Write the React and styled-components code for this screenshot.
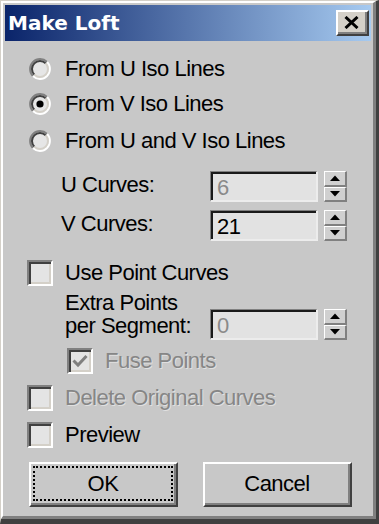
import React from 'react';
import styled, { createGlobalStyle } from 'styled-components';

const Global = createGlobalStyle`
  html, body { margin: 0; padding: 0; background: #c8c8c8; }
  body { width: 379px; height: 524px; overflow: hidden; }
`;

const FONT = `"Liberation Sans", Arial, sans-serif`;

const Window = styled.div`
  box-sizing: border-box;
  width: 379px;
  height: 524px;
  border-style: solid;
  border-width: 1px 3px 5px 1px;
  border-color: #d4d0c8 #404040 #404040 #d4d0c8;
  background: #c8c8c8;
`;

const Frame = styled.div`
  box-sizing: border-box;
  height: 100%;
  border-style: solid;
  border-width: 2px 3px 3px 2px;
  border-color: #ffffff #808080 #808080 #ffffff;
  padding: 2px;
  display: flex;
  flex-direction: column;
`;

const TitleBar = styled.div`
  height: 36px;
  flex: none;
  display: flex;
  align-items: center;
  justify-content: space-between;
  padding: 0 2px 0 3px;
  background: linear-gradient(to right, #0a246a 0%, #a6caf0 100%);
`;

const Title = styled.span`
  font-family: "DejaVu Sans", Verdana, sans-serif;
  font-weight: bold;
  font-size: 20px;
  color: #ffffff;
  letter-spacing: 0;
`;

const CloseButton = styled.div`
  box-sizing: border-box;
  width: 33px;
  height: 26px;
  border-style: solid;
  border-width: 2px;
  border-color: #ffffff #404040 #404040 #ffffff;
  box-shadow: inset -2px -2px 0 #808080;
  background: #d4d0c8;
  display: flex;
  align-items: center;
  justify-content: center;
  padding: 0 2px 2px 0;
`;

const Body = styled.div`
  flex: 1;
  display: flex;
  flex-direction: column;
  padding-left: 22px;
  font-family: ${FONT};
  font-size: 22px;
  letter-spacing: -0.5px;
  color: #000;
`;

const Row = styled.div`
  display: flex;
  align-items: ${(p) => p.$align || 'center'};
  height: ${(p) => p.$h || 26}px;
  margin-top: ${(p) => p.$mt || 0}px;
  padding-left: ${(p) => p.$indent || 0}px;
  gap: ${(p) => (p.$gap != null ? p.$gap : 12)}px;
`;

const Label = styled.span`
  line-height: 26px;
  white-space: nowrap;
  color: ${(p) => (p.$disabled ? '#868686' : '#000')};
  text-shadow: ${(p) => (p.$disabled ? '1px 1px 0 rgba(255,255,255,0.45)' : 'none')};
`;

const FieldLabel = styled.span`
  width: ${(p) => p.$w}px;
  flex: none;
  line-height: ${(p) => p.$lh || 26}px;
  padding-bottom: ${(p) => p.$pb || 0}px;
  white-space: nowrap;
`;

const Slot = styled.span`
  width: 26px;
  height: 26px;
  flex: none;
  display: flex;
  align-items: center;
  justify-content: center;
`;

const CheckBox = styled.span`
  box-sizing: border-box;
  width: 26px;
  height: 26px;
  flex: none;
  border-style: solid;
  border-width: 2px;
  border-color: #808080 #ffffff #ffffff #808080;
  box-shadow: inset 2px 2px 0 #404040, inset -2px -2px 0 #d4d0c8;
  background: #e4e4e4;
  display: flex;
  align-items: center;
  justify-content: center;
`;

const SpinGroup = styled.div`
  display: flex;
  gap: 6px;
  margin-top: ${(p) => p.$mt || 0}px;
`;

const Field = styled.div`
  box-sizing: border-box;
  width: 108px;
  height: 31px;
  border-style: solid;
  border-width: 1px 2px 2px 1px;
  border-color: #808080 #ececec #ececec #808080;
  box-shadow: inset 2px 2px 0 #1a1a1a;
  background: #e2e2e2;
  padding: 2px 0 0 6px;
  line-height: 27px;
  color: ${(p) => (p.$disabled ? '#8a8a8a' : '#000')};
`;

const Spinner = styled.div`
  box-sizing: border-box;
  width: 23px;
  height: 31px;
  display: flex;
  flex-direction: column;
`;

const SpinBtn = styled.div`
  box-sizing: border-box;
  flex: 1;
  border-style: solid;
  border-width: 1px 2px 2px 1px;
  border-color: #ffffff #808080 #808080 #ffffff;
  background: #d0d0d0;
  display: flex;
  align-items: center;
  justify-content: center;
`;

const ButtonRow = styled.div`
  display: flex;
  gap: 25px;
  margin-top: 14px;
  padding-left: 2px;
`;

const Button = styled.div`
  box-sizing: border-box;
  width: 149px;
  height: 45px;
  border-style: solid;
  border-width: 2px;
  border-color: #ffffff #404040 #404040 #ffffff;
  box-shadow: inset -2px -2px 0 #808080;
  background: #c8c8c8;
  padding: 2px 3px 4px 2px;
  display: flex;
`;

const ButtonFace = styled.span`
  flex: 1;
  display: flex;
  align-items: center;
  justify-content: center;
  border: 2px dotted ${(p) => (p.$focus ? '#000' : 'transparent')};
`;

const Radio = ({ checked }) => (
  <svg width="22" height="22" viewBox="0 0 22 22">
    <circle cx="11" cy="11" r="9" fill="#e6e6e6" />
    <path d="M3.93 18.07 A10 10 0 0 1 18.07 3.93" fill="none" stroke="#808080" strokeWidth="2" />
    <path d="M18.07 3.93 A10 10 0 0 1 3.93 18.07" fill="none" stroke="#ffffff" strokeWidth="2" />
    <path d="M5.34 16.66 A8 8 0 0 1 16.66 5.34" fill="none" stroke="#404040" strokeWidth="2" />
    <path d="M16.66 5.34 A8 8 0 0 1 5.34 16.66" fill="none" stroke="#d4d0c8" strokeWidth="2" />
    {checked && <circle cx="11" cy="11" r="3.6" fill="#000" />}
  </svg>
);

const Arrow = ({ up }) => (
  <svg width="10" height="6" viewBox="0 0 10 6">
    <path d={up ? 'M0 6 L5 0.5 L10 6 Z' : 'M0 0 L5 5.5 L10 0 Z'} fill="#000" />
  </svg>
);

const Spin = ({ value, disabled, mt }) => (
  <SpinGroup $mt={mt}>
    <Field $disabled={disabled}>{value}</Field>
    <Spinner>
      <SpinBtn><Arrow up /></SpinBtn>
      <SpinBtn><Arrow /></SpinBtn>
    </Spinner>
  </SpinGroup>
);

const Check = ({ checked, disabled }) => (
  <CheckBox>
    {checked && (
      <svg width="16" height="14" viewBox="0 0 16 14">
        <path d="M1.5 6.5 L6 11 L14.5 2" fill="none" stroke={disabled ? '#808080' : '#000'} strokeWidth="3" />
      </svg>
    )}
  </CheckBox>
);

export default function App() {
  return (
    <>
      <Global />
      <Window>
        <Frame>
          <TitleBar>
            <Title>Make Loft</Title>
            <CloseButton>
              <svg width="15" height="13" viewBox="0 0 15 13">
                <path d="M1.5 1 L13.5 12 M13.5 1 L1.5 12" stroke="#000" strokeWidth="3" />
              </svg>
            </CloseButton>
          </TitleBar>
          <Body>
            <Row $mt={15}>
              <Slot><Radio /></Slot>
              <Label>From U Iso Lines</Label>
            </Row>
            <Row $mt={9}>
              <Slot><Radio checked /></Slot>
              <Label>From V Iso Lines</Label>
            </Row>
            <Row $mt={11}>
              <Slot><Radio /></Slot>
              <Label>From U and V Iso Lines</Label>
            </Row>
            <Row $mt={17} $h={31} $indent={34} $gap={0}>
              <FieldLabel $w={149} $pb={4}>U Curves:</FieldLabel>
              <Spin value="6" disabled />
            </Row>
            <Row $mt={8} $h={31} $indent={34} $gap={0}>
              <FieldLabel $w={149} $pb={4}>V Curves:</FieldLabel>
              <Spin value="21" />
            </Row>
            <Row $mt={19}>
              <Check />
              <Label>Use Point Curves</Label>
            </Row>
            <Row $mt={5} $h={49} $indent={38} $gap={0} $align="flex-start">
              <FieldLabel $w={145} $lh={23}>
                Extra Points
                <br />
                per Segment:
              </FieldLabel>
              <Spin value="0" disabled mt={18} />
            </Row>
            <Row $mt={8} $indent={40}>
              <Check checked disabled />
              <Label $disabled>Fuse Points</Label>
            </Row>
            <Row $mt={11}>
              <Check />
              <Label $disabled>Delete Original Curves</Label>
            </Row>
            <Row $mt={11}>
              <Check />
              <Label>Preview</Label>
            </Row>
            <ButtonRow>
              <Button><ButtonFace $focus>OK</ButtonFace></Button>
              <Button><ButtonFace>Cancel</ButtonFace></Button>
            </ButtonRow>
          </Body>
        </Frame>
      </Window>
    </>
  );
}
